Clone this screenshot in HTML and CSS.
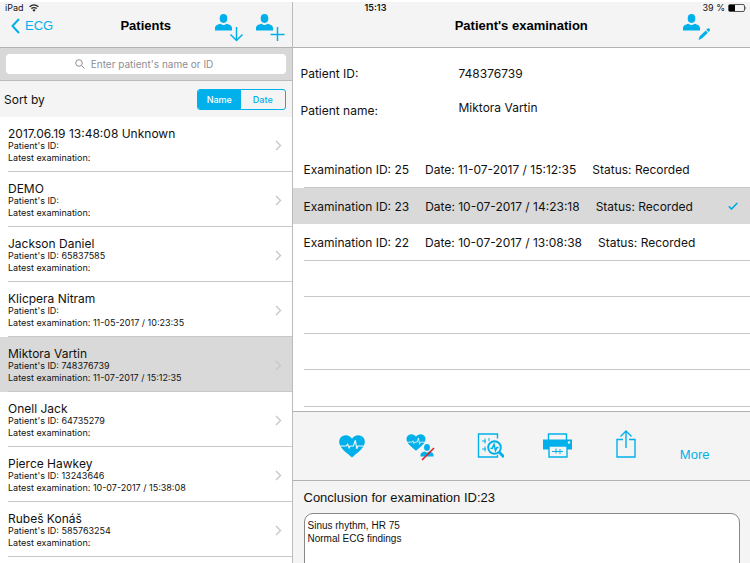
FILE: index.html
```html
<!DOCTYPE html>
<html lang="en">
<head>
<meta charset="utf-8">
<meta name="viewport" content="width=device-width, initial-scale=1">
<title>Patients</title>
<link rel="stylesheet" href="styles.css">
</head>
<body>
<svg class="defs" aria-hidden="true">
  <symbol id="person" viewBox="0 0 17 17"><ellipse cx="8.500" cy="4.500" rx="3.800" ry="4.400"/><path d="M0 16.500V14c0-2.500 2.500-3.500 5.500-4.300 1.800 1.700 4.200 1.700 6 0 3 .8 5.500 1.800 5.500 4.300v2.500z"/></symbol>
  <symbol id="heart" viewBox="0 0 28 24"><path d="M14 4C11.500-.8 4.500-1 1.800 3.200.4 5.400.3 8 1.300 10.500 3.500 15.500 9 19 14 23.500c5-4.500 10.500-8 12.700-13 1-2.500.9-5.100-.5-7.300C23.500-1 16.500-.8 14 4z"/><path d="M0 11.500h8l1.500-2 1.500 4 1-2h3.500l2-6 1.500 9 1-3H28" fill="none" stroke="#f4f4f4" stroke-width="1.200"/></symbol>
  <symbol id="chevron" viewBox="0 0 7 11"><path d="M1 1l4.500 4.500L1 10" fill="none" stroke="#c7c7cc" stroke-width="1.400"/></symbol>
</svg>
<div class="app">
  <section class="pane patients">
    <header class="bar">
      <div class="status"><span>iPad</span>
        <svg class="wifi" viewBox="0 0 10 8"><g fill="none" stroke="#222" stroke-width="1.300"><path d="M.6 2.700Q5-1 9.400 2.700M2.300 4.600Q5 2.500 7.700 4.600"/></g><path d="M3.400 5.900Q5 4.800 6.600 5.900L5 7.700z" fill="#222"/></svg>
      </div>
      <div class="nav">
        <a class="back" href="#"><svg viewBox="0 0 9 16"><path d="M8 1L1.500 8 8 15" fill="none" stroke="currentColor" stroke-width="2"/></svg>ECG</a>
        <h1>Patients</h1>
        <div class="actions">
          <button type="button" aria-label="Download patient"><svg class="action" viewBox="0 0 29 28"><use href="#person" width="17" height="17"/><path d="M21.500 13v13M15.500 20.500l6 6 6-6" fill="none" stroke="currentColor" stroke-width="1.500"/></svg></button>
          <button type="button" aria-label="Add patient"><svg class="action" viewBox="0 0 29 28"><use href="#person" width="17" height="17"/><path d="M21.500 13v14M14.500 20.500h14" fill="none" stroke="currentColor" stroke-width="1.500"/></svg></button>
        </div>
      </div>
    </header>
    <div class="search">
      <label class="field"><svg viewBox="0 0 10 10" aria-hidden="true"><path d="M6.500 6.500L9.500 9.500M7.300 4A3.300 3.300 0 1 1 .7 4a3.300 3.300 0 0 1 6.600 0z" fill="none" stroke="#8e8e93"/></svg><input type="search" aria-label="Search patients" placeholder="Enter patient's name or ID"></label>
    </div>
    <div class="sort">
      <span>Sort by</span>
      <div class="segments"><button type="button" class="on">Name</button><button type="button">Date</button></div>
    </div>
    <ul class="list">
      <li><a href="#"><span class="text"><strong>2017.06.19 13:48:08 Unknown</strong><span>Patient's ID:</span><span>Latest examination:</span></span><svg class="chev"><use href="#chevron"/></svg></a></li>
      <li><a href="#"><span class="text"><strong>DEMO</strong><span>Patient's ID:</span><span>Latest examination:</span></span><svg class="chev"><use href="#chevron"/></svg></a></li>
      <li><a href="#"><span class="text"><strong>Jackson Daniel</strong><span>Patient's ID: 65837585</span><span>Latest examination:</span></span><svg class="chev"><use href="#chevron"/></svg></a></li>
      <li><a href="#"><span class="text"><strong>Klicpera Nitram</strong><span>Patient's ID:</span><span>Latest examination: 11-05-2017 / 10:23:35</span></span><svg class="chev"><use href="#chevron"/></svg></a></li>
      <li class="selected"><a href="#"><span class="text"><strong>Miktora Vartin</strong><span>Patient's ID: 748376739</span><span>Latest examination: 11-07-2017 / 15:12:35</span></span><svg class="chev"><use href="#chevron"/></svg></a></li>
      <li><a href="#"><span class="text"><strong>Onell Jack</strong><span>Patient's ID: 64735279</span><span>Latest examination:</span></span><svg class="chev"><use href="#chevron"/></svg></a></li>
      <li><a href="#"><span class="text"><strong>Pierce Hawkey</strong><span>Patient's ID: 13243646</span><span>Latest examination: 10-07-2017 / 15:38:08</span></span><svg class="chev"><use href="#chevron"/></svg></a></li>
      <li><a href="#"><span class="text"><strong>Rubeš Konáš</strong><span>Patient's ID: 585763254</span><span>Latest examination:</span></span><svg class="chev"><use href="#chevron"/></svg></a></li>
    </ul>
  </section>
  <main class="pane exam">
    <header class="bar">
      <div class="status wide"><time>15:13</time><span class="power">39 %<svg viewBox="0 0 19 8"><rect x=".5" y=".5" width="16" height="7" rx="1.500" fill="none" stroke="#555"/><path d="M1 1h6v6H1z" fill="#000"/><path d="M17.500 2.500q1.500 1.500 0 3z" fill="#333"/></svg></span></div>
      <div class="nav">
        <h2>Patient's examination</h2>
        <div class="actions single"><button type="button" aria-label="Edit patient"><svg class="action" viewBox="0 0 29 28"><use href="#person" width="17" height="17"/><path d="M15.500 26l1.200-3.800 6-5.700 2.200 2.200-6 5.700zM23.300 15.800l1.200-1.200q1-.8 2 .2t.2 2l-1.200 1.200z"/></svg></button></div>
      </div>
    </header>
    <dl class="patient">
      <div><dt>Patient ID:</dt><dd>748376739</dd></div>
      <div class="name"><dt>Patient name:</dt><dd>Miktora Vartin</dd></div>
    </dl>
    <ul class="exams">
      <li><span>Examination ID: 25</span><span>Date: 11-07-2017 / 15:12:35</span><span>Status: Recorded</span></li>
      <li class="selected"><span>Examination ID: 23</span><span>Date: 10-07-2017 / 14:23:18</span><span>Status: Recorded</span><svg class="check" viewBox="0 0 10 8"><path d="M.8 4.300l2.700 2.700L9.300 1" fill="none" stroke="#00a8e4" stroke-width="1.600"/></svg></li>
      <li><span>Examination ID: 22</span><span>Date: 10-07-2017 / 13:08:38</span><span>Status: Recorded</span></li>
      <li></li><li></li><li></li><li></li>
    </ul>
    <div class="tools">
      <button type="button" aria-label="ECG record"><svg class="tool" viewBox="0 0 30 32"><use href="#heart" x="1" y="5" width="28" height="23"/></svg></button>
      <button type="button" aria-label="Unassign record"><svg class="tool" viewBox="0 0 30 32"><use href="#heart" x="1" y="4" width="20" height="17"/><use href="#person" x="15" y="14" width="14" height="13"/><path d="M17 30L29 18" stroke="#e0202b" stroke-width="1.600"/></svg></button>
      <button type="button" aria-label="Analyse record"><svg class="tool" viewBox="0 0 30 32"><g fill="none" stroke="currentColor"><path d="M23.500 8.500V4h-19v23h19v-2" stroke-width="1.400"/><path d="M8 11h4M11 8.500v5M15 8v3M8 19h4M11 16.500v5" stroke-width="1"/><circle cx="20.500" cy="17.500" r="6.300" stroke-width="1.900"/><path d="M16.500 18.500h1.500l2-4 1.500 6 1.500-3h1.500" stroke-width="1.600"/><path d="M25 22l5 5" stroke-width="3"/></g></svg></button>
      <button type="button" aria-label="Print record"><svg class="tool" viewBox="0 0 30 32"><path d="M0 9.500h29v10h-5V16H6v3.500H0z"/><path d="M5.500 10V4h18v6M6 16h18v11H6z" fill="none" stroke="currentColor" stroke-width="1.400"/><path d="M9 21.500h11M13 18.500v5M17 19v5" fill="none" stroke="currentColor"/><circle cx="26" cy="12.500" r="1.200" fill="#f4f4f4"/></svg></button>
      <button type="button" aria-label="Share record"><svg class="tool" viewBox="0 0 30 32"><path d="M12 9.500H6V27h18V9.500h-6M15 18V1M9.500 6.500L15 1l5.500 5.500" fill="none" stroke="currentColor" stroke-width="1.400"/></svg></button>
      <button type="button" class="more">More</button>
    </div>
    <div class="conclusion">
      <label for="conclusion">Conclusion for examination ID:23</label>
      <textarea id="conclusion">Sinus rhythm, HR 75
Normal ECG findings</textarea>
    </div>
  </main>
</div>
</body>
</html>
```
FILE: styles.css
```css
* { box-sizing: border-box; }
body { margin: 0; background: #fff; color: #111; font-family: Inter, "Liberation Sans", sans-serif; }
button { border: 0; padding: 0; background: none; color: inherit; font: inherit; }
a { color: inherit; text-decoration: none; }
ul, dl, dd, h1, h2 { margin: 0; padding: 0; }
ul { list-style: none; }
svg { display: block; flex: none; fill: currentColor; }
.defs { display: none; }

.app { display: grid; grid-template-columns: 39fr 61fr; height: 100vh; padding-top: 2px; overflow: hidden; }
.pane { display: flex; flex-direction: column; min-width: 0; min-height: 0; overflow: hidden; }
.patients { border-right: 1px solid #bbb; }
.bar { flex: none; height: 46px; background: #f4f4f4; border-bottom: 1px solid #b2b2b2; }
.status { display: flex; align-items: center; gap: 5px; height: 12px; padding-left: 5px; font-size: 9px; line-height: 12px; }
.wifi { width: 10px; height: 8px; }
.wide { justify-content: space-between; padding: 0 3px 0 72px; }
.wide time { font-weight: 600; }
.power { display: flex; align-items: center; gap: 3px; }
.power svg { width: 19px; height: 8px; }
.nav { display: grid; grid-template-columns: 1fr auto 1fr; align-items: start; color: #00b0ea; }
h1, h2 { grid-column: 2; color: #000; font: bold 13px/24px "Liberation Sans", sans-serif; }
.back { display: flex; align-items: center; gap: 5px; padding-left: 11px; font: 13px/24px "Liberation Sans", sans-serif; }
.back svg { width: 9px; height: 16px; }
.actions { display: flex; justify-content: flex-end; gap: 12px; padding-right: 7px; }
.single { padding-right: 38px; }
.action { width: 29px; height: 28px; }

.search { flex: none; padding: 6px; background: #d8d8d8; border-bottom: 1px solid #bbb; }
.field { display: flex; align-items: center; justify-content: center; gap: 6px; height: 20px; border-radius: 4px; background: #fff; }
.field svg { width: 10px; height: 10px; }
.field input { width: 126px; height: 20px; padding: 0; border: 0; outline: 0; background: none; font: 10px Inter, sans-serif; appearance: none; }
.field input::-webkit-search-cancel-button { display: none; }
.field input::placeholder { color: #8e8e93; opacity: 1; white-space: nowrap; }
.sort { display: flex; flex: none; align-items: center; justify-content: space-between; height: 36px; padding: 0 6px 0 4px; background: #f4f4f4; font-size: 12px; }
.segments { display: flex; width: 89px; height: 21px; overflow: hidden; border: 1px solid #00b0ea; border-radius: 3px; color: #00b0ea; font-size: 9px; font-weight: 500; }
.segments button { flex: 1; }
.segments .on { background: #00b0ea; color: #fff; }

.list a { display: flex; align-items: center; justify-content: space-between; height: 55px; margin-left: 8px; padding: 10px 10px 7px 0; border-bottom: 1px solid #c8c7cc; }
.list .selected { background: #d9d9d9; }
.text { display: grid; font-size: 9px; line-height: 12px; }
.text strong { font-size: 12px; font-weight: 400; line-height: 13px; }
.chev { width: 7px; height: 11px; }

.patient { padding: 17px 8px 0; font-size: 12px; line-height: 18px; }
.patient div { display: grid; grid-template-columns: 158px 1fr; height: 34px; }
.patient .name dt { padding-top: 3px; }
.exams { flex: none; margin-top: 18px; font-size: 12px; }
.exams li { display: flex; align-items: center; gap: 16px; height: 37px; padding: 0 12px 0 11px; background: linear-gradient(#c8c7cc, #c8c7cc) 11px 100% / 100% 1px no-repeat; }
.exams li:nth-child(even) { height: 36px; }
.exams .selected { background: #d9d9d9; }
.check { width: 10px; height: 8px; margin-left: auto; }
.tools { display: flex; flex: none; align-items: center; height: 70px; margin-top: 4px; padding: 0 21px 0 25px; background: #f4f4f4; border-top: 1px solid #b2b2b2; border-bottom: 1px solid #b2b2b2; color: #00b0ea; }
.tools button { display: flex; flex: 1; justify-content: center; }
.tool { width: 30px; height: 32px; }
.tools .more { padding-top: 18px; font: 13px/16px "Liberation Sans", sans-serif; }
.conclusion { display: flex; flex: 1; flex-direction: column; gap: 7px; padding: 8px 10px 0 11px; background: #f4f4f4; font: 13px/17px "Liberation Sans", sans-serif; }
.conclusion textarea { flex: none; height: 80px; padding: 5px 3px; border: 1px solid #888; border-radius: 9px; background: #fff; color: #111; font: 10px/13px "Liberation Sans", sans-serif; resize: none; }
```
